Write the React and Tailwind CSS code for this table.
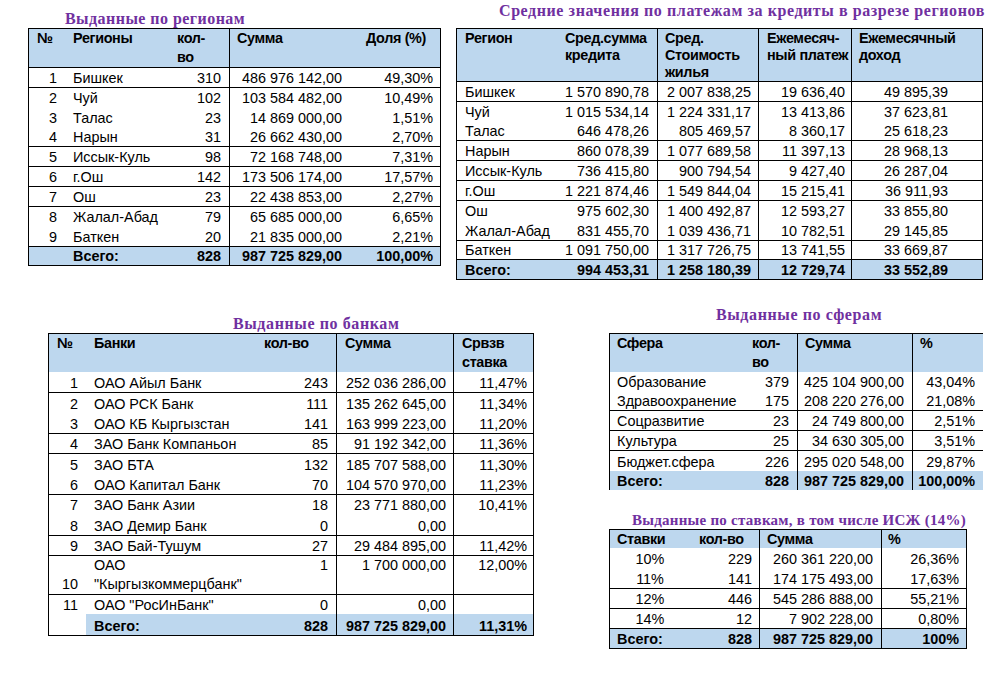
import React from 'react';

const TITLE = "font-['Liberation_Serif',serif] font-bold leading-[18px] text-[#7030A0] whitespace-nowrap";
const B = 'bg-[#BDD7EE]';

function Table({ grid, className, header, headerH, headerLead, headerCols, rows, bodyCols }) {
  return (
    <div className={className}>
      <div className={`grid ${grid} ${headerH} bg-[#BDD7EE] font-bold tracking-[-0.35px]`}>
        {header.map((v, i) => (
          <div key={i} className={`flex items-start whitespace-nowrap ${headerCols[i]}`}>
            <span className={headerLead}>{v}</span>
          </div>
        ))}
      </div>
      {rows.map((r, ri) => (
        <div
          key={ri}
          className={`grid ${grid} ${r.h} ${r.bt ? 'border-t border-black' : ''} ${r.total ? 'font-bold' : ''} ${r.bg || ''}`}
        >
          {r.c.map((v, i) => (
            <div key={i} className={`flex items-end whitespace-nowrap ${bodyCols[i]} ${r.cc ? r.cc[i] : ''}`}>
              <span className={r.lead || 'leading-[18px]'}>{v}</span>
            </div>
          ))}
        </div>
      ))}
    </div>
  );
}

const t1Rows = [
  { h: 'h-[20px]', bt: true, c: ['1', 'Бишкек', '310', '486 976 142,00', '49,30%'] },
  { h: 'h-[20px]', bt: true, c: ['2', 'Чуй', '102', '103 584 482,00', '10,49%'] },
  { h: 'h-[20px]', bt: false, c: ['3', 'Талас', '23', '14 869 000,00', '1,51%'] },
  { h: 'h-[19px]', bt: false, c: ['4', 'Нарын', '31', '26 662 430,00', '2,70%'] },
  { h: 'h-[20px]', bt: true, c: ['5', 'Иссык-Куль', '98', '72 168 748,00', '7,31%'] },
  { h: 'h-[20px]', bt: true, c: ['6', 'г.Ош', '142', '173 506 174,00', '17,57%'] },
  { h: 'h-[20px]', bt: true, c: ['7', 'Ош', '23', '22 438 853,00', '2,27%'] },
  { h: 'h-[20px]', bt: true, c: ['8', 'Жалал-Абад', '79', '65 685 000,00', '6,65%'] },
  { h: 'h-[20px]', bt: false, c: ['9', 'Баткен', '20', '21 835 000,00', '2,21%'] },
  { h: 'h-[19px]', bt: true, total: true, bg: B, c: ['', 'Всего:', '828', '987 725 829,00', '100,00%'] },
];

const t2Rows = [
  { h: 'h-[20px]', bt: true, c: ['Бишкек', '1 570 890,78', '2 007 838,25', '19 636,40', '49 895,39'] },
  { h: 'h-[20px]', bt: true, c: ['Чуй', '1 015 534,14', '1 224 331,17', '13 413,86', '37 623,81'] },
  { h: 'h-[19px]', bt: false, c: ['Талас', '646 478,26', '805 469,57', '8 360,17', '25 618,23'] },
  { h: 'h-[20px]', bt: true, c: ['Нарын', '860 078,39', '1 077 689,58', '11 397,13', '28 968,13'] },
  { h: 'h-[20px]', bt: true, c: ['Иссык-Куль', '736 415,80', '900 794,54', '9 427,40', '26 287,04'] },
  { h: 'h-[20px]', bt: true, c: ['г.Ош', '1 221 874,46', '1 549 844,04', '15 215,41', '36 911,93'] },
  { h: 'h-[20px]', bt: true, c: ['Ош', '975 602,30', '1 400 492,87', '12 593,27', '33 855,80'] },
  { h: 'h-[20px]', bt: false, c: ['Жалал-Абад', '831 455,70', '1 039 436,71', '10 782,51', '29 145,85'] },
  { h: 'h-[19px]', bt: true, c: ['Баткен', '1 091 750,00', '1 317 726,75', '13 741,55', '33 669,87'] },
  { h: 'h-[20px]', bt: true, total: true, bg: B, c: ['Всего:', '994 453,31', '1 258 180,39', '12 729,74', '33 552,89'] },
];

const bankRows = [
  { h: 'h-[20px]', bt: false, c: ['1', 'ОАО Айыл Банк', '243', '252 036 286,00', '11,47%'] },
  { h: 'h-[21px]', bt: true, c: ['2', 'ОАО РСК Банк', '111', '135 262 645,00', '11,34%'] },
  { h: 'h-[20px]', bt: false, c: ['3', 'ОАО КБ Кыргызстан', '141', '163 999 223,00', '11,20%'] },
  { h: 'h-[20px]', bt: true, c: ['4', 'ЗАО Банк Компаньон', '85', '91 192 342,00', '11,36%'] },
  { h: 'h-[21px]', bt: true, c: ['5', 'ЗАО БТА', '132', '185 707 588,00', '11,30%'] },
  { h: 'h-[20px]', bt: false, c: ['6', 'ОАО Капитал Банк', '70', '104 570 970,00', '11,23%'] },
  { h: 'h-[20px]', bt: true, c: ['7', 'ЗАО Банк Азии', '18', '23 771 880,00', '10,41%'] },
  { h: 'h-[21px]', bt: false, c: ['8', 'ЗАО Демир Банк', '0', '0,00', ''] },
  { h: 'h-[20px]', bt: true, c: ['9', 'ЗАО Бай-Тушум', '27', '29 484 895,00', '11,42%'] },
  {
    h: 'h-[39px]',
    bt: true,
    lead: 'leading-[19px]',
    c: [
      '10',
      <>ОАО<br />"Кыргызкоммерцбанк"</>,
      <>1<br />{'\u00a0'}</>,
      <>1 700 000,00<br />{'\u00a0'}</>,
      <>12,00%<br />{'\u00a0'}</>,
    ],
  },
  { h: 'h-[20px]', bt: true, c: ['11', 'ОАО "РосИнБанк"', '0', '0,00', ''] },
  {
    h: 'h-[21px]',
    bt: false,
    total: true,
    cc: ['', B, B, B, B],
    c: ['', 'Всего:', '828', '987 725 829,00', '11,31%'],
  },
];

const sphereRows = [
  { h: 'h-[19px]', bt: false, c: ['Образование', '379', '425 104 900,00', '43,04%'] },
  { h: 'h-[19px]', bt: false, c: ['Здравоохранение', '175', '208 220 276,00', '21,08%'] },
  { h: 'h-[20px]', bt: true, c: ['Соцразвитие', '23', '24 749 800,00', '2,51%'] },
  { h: 'h-[20px]', bt: true, c: ['Культура', '25', '34 630 305,00', '3,51%'] },
  { h: 'h-[21px]', bt: true, c: ['Бюджет.сфера', '226', '295 020 548,00', '29,87%'] },
  { h: 'h-[19px]', bt: false, total: true, bg: B, c: ['Всего:', '828', '987 725 829,00', '100,00%'] },
];

const rateRows = [
  { h: 'h-[20px]', bt: false, c: ['10%', '229', '260 361 220,00', '26,36%'] },
  { h: 'h-[20px]', bt: false, c: ['11%', '141', '174 175 493,00', '17,63%'] },
  { h: 'h-[20px]', bt: true, c: ['12%', '446', '545 286 888,00', '55,21%'] },
  { h: 'h-[20px]', bt: true, c: ['14%', '12', '7 902 228,00', '0,80%'] },
  {
    h: 'h-[20px]',
    bt: true,
    total: true,
    bg: B,
    c: [<span className="block w-[80px] pl-[7px] text-left">Всего:</span>, '828', '987 725 829,00', '100%'],
  },
];

export default function App() {
  return (
    <div className="w-[986px] h-[680px] bg-white overflow-hidden font-['Liberation_Sans',Arial,sans-serif] text-[14.4px] text-black">
      <div className="flex items-start h-[280px]">
        <div className="ml-[28px] w-[413px] shrink-0">
          <div className={`pt-[10px] h-[28px] pl-[37px] text-[16px] tracking-[0.45px] ${TITLE}`}>Выданные по регионам</div>
          <Table
            className="w-[413px] border border-black"
            grid="grid-cols-[36px_100px_64px_121px_90px]"
            headerH="h-[38px]"
            headerLead="leading-[19px]"
            header={['№', 'Регионы', <>кол-<br />во</>, 'Сумма', 'Доля (%)']}
            headerCols={['pl-[8px]', 'pl-[8px]', 'pl-[12px]', 'pl-[7px] border-l border-black', 'pl-[16px]']}
            bodyCols={[
              'justify-end pr-[8px]',
              'pl-[8px]',
              'justify-end pr-[8px]',
              'justify-end pr-[8px] border-l border-black',
              'justify-end pr-[7px]',
            ]}
            rows={t1Rows}
          />
        </div>
        <div className="ml-[15px] w-[527px] shrink-0">
          <div className={`pt-[2px] h-[28px] pl-[43px] text-[16px] tracking-[0.58px] ${TITLE}`}>
            Средние значения по платежам за кредиты в разрезе регионов
          </div>
          <Table
            className="w-[527px] border border-black"
            grid="grid-cols-[100px_100px_101px_93px_131px]"
            headerH="h-[52px]"
            headerLead="leading-[17px] pt-px"
            header={[
              'Регион',
              <>Сред.сумма<br />кредита</>,
              <>Сред.<br />Стоимость<br />жилья</>,
              <>Ежемесяч-<br />ный платеж</>,
              <>Ежемесячный<br />доход</>,
            ]}
            headerCols={[
              'pl-[8px]',
              'pl-[8px]',
              'pl-[7px] border-l border-black',
              'pl-[8px] border-l border-black',
              'pl-[7px] border-l border-black',
            ]}
            bodyCols={[
              'pl-[8px]',
              'justify-end pr-[8px]',
              'justify-end pr-[7px] border-l border-black',
              'justify-end pr-[6px] border-l border-black',
              'justify-end pr-[34px] border-l border-black',
            ]}
            rows={t2Rows}
          />
        </div>
      </div>

      <div className="flex items-start">
        <div className="ml-[48px] w-[486px] pt-[35px] shrink-0">
          <div className={`h-[18px] pl-[185px] text-[16px] tracking-[0.6px] ${TITLE}`}>Выданные по банкам</div>
          <Table
            className="w-[486px] border border-black"
            grid="grid-cols-[37px_170px_80px_117px_80px]"
            headerH="h-[38px]"
            headerLead="leading-[19px]"
            header={['№', 'Банки', 'кол-во', 'Сумма', <>Срвзв<br />ставка</>]}
            headerCols={[
              'pl-[8px]',
              'pl-[8px]',
              'pl-[8px]',
              'pl-[8px] border-l border-black',
              'pl-[8px] border-l border-black',
            ]}
            bodyCols={[
              'justify-end pr-[8px]',
              'pl-[8px]',
              'justify-end pr-[8px]',
              'justify-end pr-[7px] border-l border-black',
              'justify-end pr-[6px] border-l border-black',
            ]}
            rows={bankRows}
          />
        </div>

        <div className="ml-[75px] w-[374px] pt-[26px] shrink-0">
          <div className={`h-[27px] pl-[107px] text-[16px] tracking-[0.6px] ${TITLE}`}>Выданные по сферам</div>
          <Table
            className="w-[374px] border-l border-t border-black"
            grid="grid-cols-[135px_52px_115px_71px]"
            headerH="h-[38px]"
            headerLead="leading-[19px]"
            header={['Сфера', <>кол-<br />во</>, 'Сумма', '%']}
            headerCols={['pl-[7px]', 'pl-[7px]', 'pl-[7px] border-l border-black', 'pl-[7px] border-l border-black']}
            bodyCols={[
              'pl-[7px]',
              'justify-end pr-[8px]',
              'justify-end pr-[8px] border-l border-black',
              'justify-end pr-[8px] border-l border-black',
            ]}
            rows={sphereRows}
          />

          <div className={`mt-[21px] h-[18px] pl-[23px] text-[15px] tracking-[0.25px] ${TITLE}`}>
            Выданные по ставкам, в том числе ИСЖ (14%)
          </div>
          <Table
            className="w-[358px] border border-black"
            grid="grid-cols-[80px_69px_122px_85px]"
            headerH="h-[18px]"
            headerLead="leading-[18px]"
            header={['Ставки', 'кол-во', 'Сумма', '%']}
            headerCols={['pl-[7px]', 'pl-[9px]', 'pl-[7px] border-l border-black', 'pl-[6px] border-l border-black']}
            bodyCols={[
              'justify-center',
              'justify-end pr-[7px]',
              'justify-end pr-[8px] border-l border-black',
              'justify-end pr-[7px] border-l border-black',
            ]}
            rows={rateRows}
          />
        </div>
      </div>
    </div>
  );
}
